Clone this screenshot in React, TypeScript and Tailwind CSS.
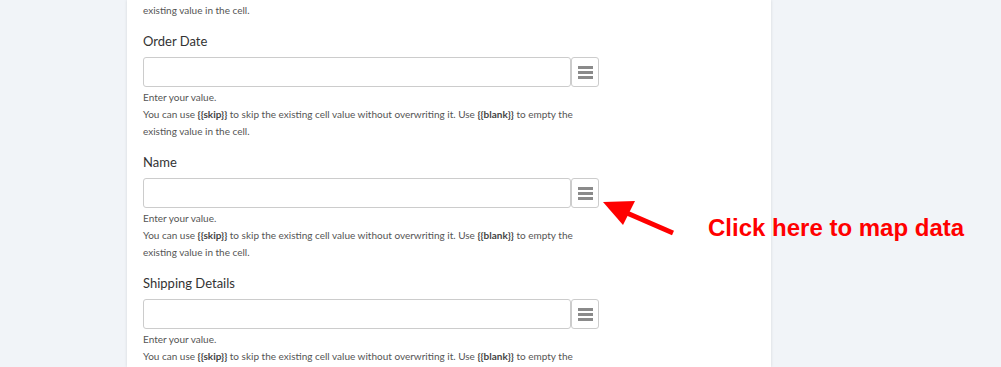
import React from "react";

type FieldProps = {
  label: string;
};

function HelpText() {
  return (
    <div className="mt-[2px] text-[10px] leading-[17px] text-[#555]">
      <div>Enter your value.</div>
      <div>
        You can use <b className="font-bold text-[#444]">{"{{skip}}"}</b> to skip the existing cell value
        without overwriting it. Use <b className="font-bold text-[#444]">{"{{blank}}"}</b> to empty the
      </div>
      <div>existing value in the cell.</div>
    </div>
  );
}

function MenuButton() {
  return (
    <button className="flex h-[30px] w-[28px] shrink-0 flex-col items-center justify-center gap-[2px] rounded-[3px] border border-[#ccc] bg-white">
      <span className="h-[3px] w-[15px] bg-[#8a8a8a]" />
      <span className="h-[3px] w-[15px] bg-[#8a8a8a]" />
      <span className="h-[3px] w-[15px] bg-[#8a8a8a]" />
    </button>
  );
}

function Field({ label }: FieldProps) {
  return (
    <div className="mt-[13px]">
      <div className="text-[13px] leading-[18px] text-[#333]">{label}</div>
      <div className="mt-[7px] flex w-[456px]">
        <input className="h-[30px] flex-1 rounded-[3px] border border-[#ccc] bg-white outline-none" />
        <MenuButton />
      </div>
      <HelpText />
    </div>
  );
}

export default function App() {
  return (
    <div
      className="relative flex h-[367px] w-[1001px] overflow-hidden bg-[#f1f4f8]"
      style={{ fontFamily: "Lato, 'Open Sans', sans-serif" }}
    >
      <div className="ml-[127px] w-[644px] bg-white px-4 pt-[2px] shadow-[0_0_3px_rgba(0,0,0,0.12)]">
        <div className="text-[10px] leading-[17px] text-[#555]">existing value in the cell.</div>
        <Field label="Order Date" />
        <Field label="Name" />
        <Field label="Shipping Details" />
      </div>

      <svg className="absolute left-0 top-0" width="1001" height="367" viewBox="0 0 1001 367">
        <line x1="620" y1="210" x2="673" y2="233" stroke="#ff0000" strokeWidth="5" />
        <polygon points="603,202 635,201 623,225" fill="#ff0000" />
      </svg>
      <div
        className="absolute left-[708px] top-[214px] text-[24px] font-bold leading-[28px] text-[#ff0000]"
        style={{ fontFamily: "'Liberation Sans', Arial, sans-serif" }}
      >
        Click here to map data
      </div>
    </div>
  );
}
